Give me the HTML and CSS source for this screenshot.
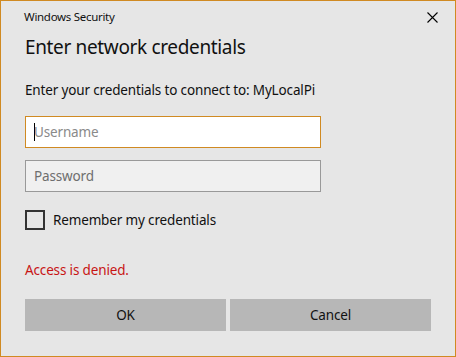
FILE: index.html
```html
<!DOCTYPE html>
<html lang="en">
<head>
<meta charset="utf-8">
<title>Windows Security</title>
<link rel="stylesheet" href="styles.css">
</head>
<body>
<div class="window">
  <div class="titlebar">
    <span class="title">Windows Security</span>
    <button class="close" aria-label="Close">
      <svg width="11" height="11" viewBox="0 0 11 11"><path d="M0.5 0.5 L10.5 10.5 M10.5 0.5 L0.5 10.5" stroke="#000" stroke-width="1.1" fill="none"/></svg>
    </button>
  </div>
  <div class="content">
    <h1 class="heading">Enter network credentials</h1>
    <p class="prompt">Enter your credentials to connect to: MyLocalPi</p>
    <div class="field focused"><span class="caret"></span><span class="placeholder">Username</span></div>
    <div class="field password"><span class="placeholder">Password</span></div>
    <label class="remember"><span class="box"></span><span>Remember my credentials</span></label>
    <p class="error">Access is denied.</p>
    <div class="buttons">
      <button class="btn">OK</button>
      <button class="btn">Cancel</button>
    </div>
  </div>
</div>
</body>
</html>
```
FILE: styles.css
```css
* { box-sizing: border-box; }
html, body { margin: 0; padding: 0; }
body {
  font-family: "Noto Sans", "Open Sans", sans-serif;
  color: #1a1a1a;
  background: #e6e6e6;
}
.window {
  width: 456px;
  height: 357px;
  border: 1px solid #d08a22;
  background: #e6e6e6;
  display: flex;
  flex-direction: column;
}
.titlebar {
  height: 32px;
  display: flex;
  align-items: center;
  justify-content: space-between;
  padding-left: 23px;
}
.title {
  font-size: 11.5px;
  letter-spacing: -0.3px;
  line-height: 32px;
  color: #111;
}
.close {
  width: 46px;
  height: 32px;
  border: 0;
  background: transparent;
  padding: 0;
  display: flex;
  align-items: center;
  justify-content: center;
}
.content {
  padding: 0 24px 0 24px;
  display: flex;
  flex-direction: column;
}
.heading {
  margin: 0;
  font-size: 19px;
  letter-spacing: -0.35px;
  line-height: 28px;
  font-weight: 400;
  color: #111;
}
.prompt {
  margin: 19px 0 0;
  font-size: 13.5px;
  letter-spacing: -0.15px;
  line-height: 20px;
  color: #111;
}
.field {
  width: 296px;
  height: 32px;
  margin-top: 16px;
  border: 1px solid #d08a22;
  background: #fff;
  padding-left: 8px;
  display: flex;
  align-items: center;
  font-size: 13.5px;
  letter-spacing: -0.15px;
  line-height: 20px;
}
.field.password {
  margin-top: 12px;
  background: #f0f0f0;
  border-color: #999;
}
.placeholder { color: #8a8a8a; }
.password .placeholder { color: #6e6e6e; }
.caret {
  width: 1px;
  height: 18px;
  background: #000;
  margin-right: -1px;
}
.remember {
  margin-top: 18px;
  display: flex;
  align-items: center;
  gap: 8px;
  font-size: 13.5px;
  letter-spacing: -0.15px;
  line-height: 20px;
  color: #111;
}
.box {
  width: 20px;
  height: 20px;
  border: 2px solid #333;
}
.error {
  margin: 30px 0 0;
  font-size: 13.5px;
  letter-spacing: -0.15px;
  line-height: 20px;
  color: #c81414;
}
.buttons {
  margin-top: 19px;
  display: grid;
  grid-template-columns: 1fr 1fr;
  gap: 4px;
}
.btn {
  height: 32px;
  border: 0;
  background: #b7b7b7;
  font-family: inherit;
  font-size: 13.5px;
  letter-spacing: -0.15px;
  color: #111;
  padding: 0;
}
```
